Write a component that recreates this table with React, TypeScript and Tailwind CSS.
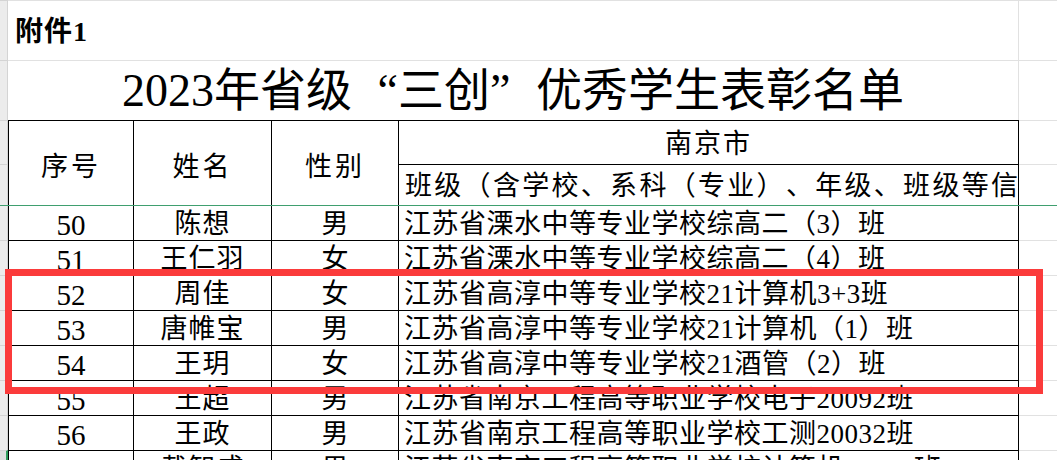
import React from "react";

const rows: [string, string, string, string][] = [
  ["50", "陈想", "男", "江苏省溧水中等专业学校综高二（3）班"],
  ["51", "王仁羽", "女", "江苏省溧水中等专业学校综高二（4）班"],
  ["52", "周佳", "女", "江苏省高淳中等专业学校21计算机3+3班"],
  ["53", "唐帷宝", "男", "江苏省高淳中等专业学校21计算机（1）班"],
  ["54", "王玥", "女", "江苏省高淳中等专业学校21酒管（2）班"],
  ["55", "王超", "男", "江苏省南京工程高等职业学校电子20092班"],
  ["56", "王政", "男", "江苏省南京工程高等职业学校工测20032班"],
  ["57", "戴智成", "男", "江苏省南京工程高等职业学校计算机20091班"],
];

const font = "font-['Liberation_Serif','Noto_Sans_CJK_SC',serif]";

function DataRow({ r, first, last }: { r: [string, string, string, string]; first: boolean; last: boolean }) {
  const top = first ? "" : "border-t";
  return (
    <div className={`flex ${first ? "h-[34px]" : "h-[35px]"} shrink-0`}>
      <div
        className={`w-[8px] shrink-0 ${top} border-[#d4d4d4] ${last ? "bg-[#dedede] border-r-2 border-r-[#2e9d5c]" : "bg-[#ececec] border-r border-r-[#d4d4d4]"}`}
      />
      <div className={`w-[125px] shrink-0 ${top} border-l border-black flex items-center justify-center pt-[4px] text-[29px] leading-none`}>
        {last ? "" : r[0]}
      </div>
      <div className={`w-[138px] shrink-0 ${top} border-l border-black flex items-center justify-center pt-[3px] text-[27px] leading-none tracking-[1px]`}>
        {r[1]}
      </div>
      <div className={`w-[127px] shrink-0 ${top} border-l border-black flex items-center justify-center pt-[3px] text-[27px] leading-none`}>
        {r[2]}
      </div>
      <div className={`w-[621px] shrink-0 ${top} border-l border-r border-black flex items-center pl-[5px] pt-[3px] text-[27px] leading-none tracking-[0.5px] whitespace-nowrap overflow-hidden [text-spacing-trim:space-all]`}>
        {r[3]}
      </div>
      <div className={`flex-1 ${top} border-[#e1e1e1]`} />
    </div>
  );
}

export default function App() {
  return (
    <div className={`relative w-[1057px] h-[460px] overflow-hidden bg-white text-black ${font}`}>
      <div className="flex flex-col">
        {/* Row A */}
        <div className="flex h-[60px] shrink-0">
          <div className="w-[8px] shrink-0 bg-[#ececec] border-r border-[#d4d4d4] border-t" />
          <div className="w-[1010px] shrink-0 border-t border-[#e1e1e1] flex items-center pl-[7px] pt-[3px]">
            <span className="text-[28px] font-bold leading-none tracking-[1px]">附件1</span>
          </div>
          <div className="flex-1 border-t border-l border-[#e1e1e1]" />
        </div>
        {/* Row B title */}
        <div className="flex h-[60px] shrink-0">
          <div className="w-[8px] shrink-0 bg-[#ececec] border-r border-[#d4d4d4] border-t" />
          <div className="w-[1010px] shrink-0 border-t border-[#e1e1e1] flex items-center justify-center pt-[1px]">
            <span className="text-[46px] leading-none whitespace-nowrap">
              2023年省级
              <span className="inline-block w-[46px] text-right">“</span>
              三创
              <span className="inline-block w-[46px] text-left">”</span>
              优秀学生表彰名单
            </span>
          </div>
          <div className="flex-1 border-t border-l border-[#e1e1e1]" />
        </div>
        {/* Header */}
        <div className="flex h-[85px] shrink-0">
          <div className="w-[8px] shrink-0 flex flex-col bg-[#ececec] border-r border-[#d4d4d4]">
            <div className="h-[44px] border-t border-[#d4d4d4]" />
            <div className="flex-1 border-t border-[#d4d4d4]" />
          </div>
          <div className="w-[125px] shrink-0 border-t border-l border-black flex items-center justify-center pt-[8px] text-[27px] leading-none tracking-[3px]">
            序号
          </div>
          <div className="w-[138px] shrink-0 border-t border-l border-black flex items-center justify-center pt-[8px] text-[27px] leading-none tracking-[3px]">
            姓名
          </div>
          <div className="w-[127px] shrink-0 border-t border-l border-black flex items-center justify-center pt-[8px] text-[27px] leading-none tracking-[3px]">
            性别
          </div>
          <div className="w-[621px] shrink-0 flex flex-col">
            <div className="h-[44px] border-t border-l border-r border-black flex items-center justify-center pt-[3px] text-[27px] leading-none tracking-[2px]">
              南京市
            </div>
            <div className="flex-1 border-t border-l border-r border-black flex items-center pl-[6px] pt-[2px] text-[27px] leading-none tracking-[2.3px] whitespace-nowrap overflow-hidden [text-spacing-trim:space-all]">
              班级（含学校、系科（专业）、年级、班级等信息）
            </div>
          </div>
          <div className="flex-1 flex flex-col">
            <div className="h-[44px] border-t border-[#e1e1e1]" />
            <div className="flex-1 border-t border-[#e1e1e1]" />
          </div>
        </div>
        {/* Freeze line */}
        <div className="h-[1px] shrink-0 bg-[#3f9f6f]" />
        {rows.map((r, i) => (
          <DataRow key={r[0]} r={r} first={i === 0} last={i === rows.length - 1} />
        ))}
      </div>
      {/* Red highlight box */}
      <div className="absolute left-[5px] top-[269px] w-[1038px] h-[125px] border-[7px] border-[#fb3b3b] pointer-events-none" />
    </div>
  );
}
